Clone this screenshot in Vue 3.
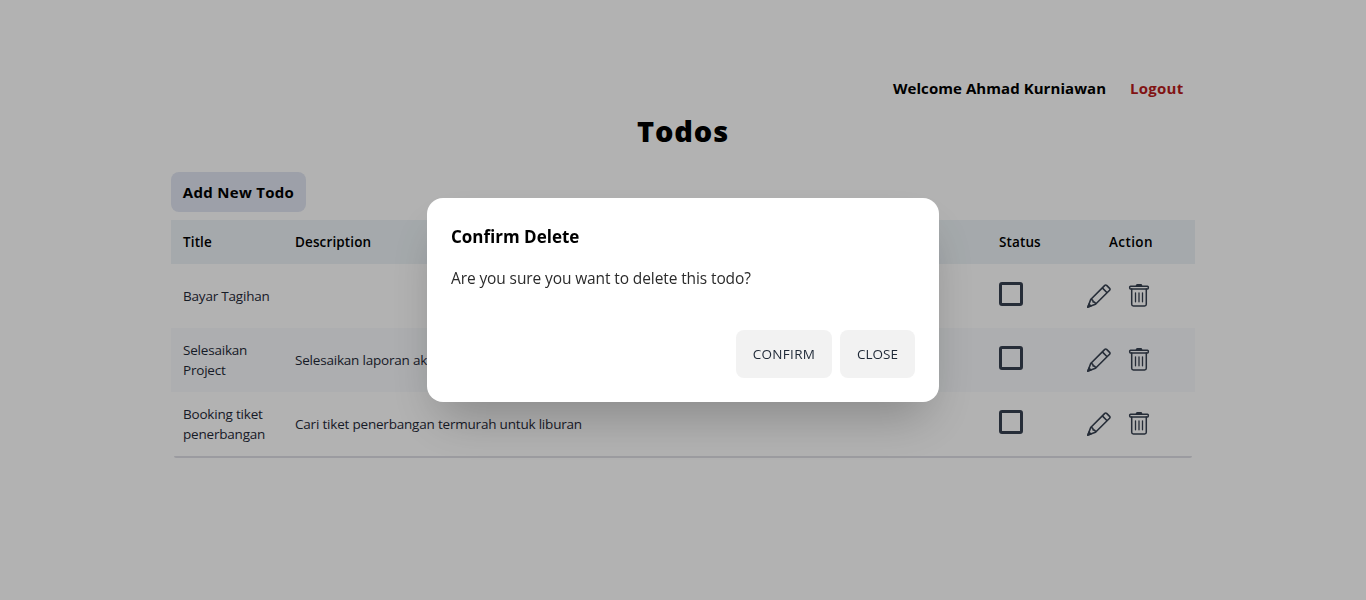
<script setup>
const todos = [
  { title: 'Bayar Tagihan', description: '' },
  { title: 'Selesaikan Project', description: 'Selesaikan laporan akhir' },
  { title: 'Booking tiket penerbangan', description: 'Cari tiket penerbangan termurah untuk liburan' },
]
</script>

<template>
  <main class="page">
    <div class="account">
      <span class="welcome">Welcome Ahmad Kurniawan</span>
      <a class="logout">Logout</a>
    </div>
    <h1 class="heading">Todos</h1>
    <button class="add">Add New Todo</button>
    <div class="table">
      <div class="row head">
        <span>Title</span>
        <span class="h-desc">Description</span>
        <span class="h-status">Status</span>
        <span class="h-action">Action</span>
      </div>
      <div v-for="todo in todos" :key="todo.title" class="row">
        <span class="title">{{ todo.title }}</span>
        <span class="desc">{{ todo.description }}</span>
        <span class="check"></span>
        <span class="actions">
          <svg width="24" height="24" viewBox="0 0 24 24" fill="none" stroke="currentColor" stroke-width="1.6" stroke-linejoin="round">
            <path d="M.9 23.1 3.7 15.5 17.8 1.4Q18.7.6 19.600 1.400L22.600 4.400Q23.400 5.300 22.600 6.200L8.500 20.300Z" />
            <path d="M3.700 15.500Q6.100 15.400 6.100 17.900 8.600 17.900 8.500 20.300M15.300 3.900 20.100 8.700" />
            <path d="M.9 23.100 2 20.200 3.900 22Z" fill="currentColor" />
          </svg>
          <svg width="24" height="24" viewBox="0 0 24 24" fill="none" stroke="currentColor" stroke-width="1.5" stroke-linejoin="round" stroke-linecap="round">
            <rect x="2.700" y="2.200" width="18.600" height="2.700" rx=".8" />
            <path d="M9.500 1.500Q9.500.8 10.300.8H13.700Q14.500.8 14.500 1.500V2H9.500Z" fill="currentColor" />
            <path d="M4.700 5V20.300Q4.700 21.900 6.400 21.900H17.600Q19.300 21.900 19.300 20.300V5" />
            <path d="M8.500 8.800V17.800M12 8.800V17.800M15.500 8.800V17.800" stroke-width="1.300" />
          </svg>
        </span>
      </div>
    </div>
  </main>
  <div class="overlay">
    <section class="modal">
      <h3>Confirm Delete</h3>
      <p>Are you sure you want to delete this todo?</p>
      <div class="buttons">
        <button class="confirm">CONFIRM</button>
        <button class="close">CLOSE</button>
      </div>
    </section>
  </div>
</template>

<style>
body { background: #fff; overflow: hidden; }
</style>

<style scoped>
* { box-sizing: border-box; }
.page, .overlay { font-family: "Segoe UI", "Open Sans", "Noto Sans", sans-serif; }
.page { width: 1024px; height: 600px; margin: 0 auto; padding-top: 76px; color: #000; }
button { font-family: inherit; border: 0; padding: 0; white-space: nowrap; }
.account { display: flex; justify-content: flex-end; gap: 24px; padding-right: 12px; height: 24px; line-height: 25px; font-size: 15px; font-weight: 700; white-space: nowrap; }
.welcome { width: 213px; letter-spacing: .06px; }
.logout { width: 53px; color: #b91c1c; letter-spacing: .25px; }
.heading { margin: 14px 0 0; height: 36px; line-height: 34px; font-size: 29px; font-weight: 800; letter-spacing: .9px; text-align: center; }
.add { display: block; margin-top: 22px; width: 135px; height: 40px; border-radius: 8px; background: #e1e6f2; color: #000; font-size: 15px; font-weight: 700; letter-spacing: .3px; padding-bottom: 1px; }
.table { position: relative; margin-top: 8px; }
.table::after { content: ""; position: absolute; left: 3px; right: 3px; top: 100%; height: 2px; border-radius: 0 0 3px 3px; background: #dfdfe6; }
.row { display: grid; grid-template-columns: 112px 704px 78px 130px; align-items: center; height: 64px; padding-left: 12px; background: #fff; color: #1f2937; font-size: 13.5px; line-height: 20px; letter-spacing: -.2px; }
.row:nth-child(odd):not(.head) { background: #f8fafc; }
.row.head { height: 44px; background: #edf3f7; color: #000; font-weight: 600; letter-spacing: .12px; }
.title { width: 88px; }
.desc { white-space: nowrap; }
.h-action { padding-left: 32px; letter-spacing: .4px; }
.check { width: 24px; height: 24px; margin-bottom: 4px; border: 3px solid #374151; border-radius: 3px; }
.actions { display: flex; gap: 16px; padding-left: 10px; color: #374151; }
.overlay { position: fixed; inset: 0; display: flex; align-items: center; justify-content: center; background: rgba(0, 0, 0, .3); }
.modal { width: 512px; height: 204px; padding: 24px; border-radius: 16px; background: #fff; box-shadow: 0 25px 50px -12px rgba(0, 0, 0, .25); }
h3 { margin: 0; height: 28px; line-height: 29px; font-size: 17px; font-weight: 700; color: #000; }
p { margin: 16px 0 0; height: 24px; line-height: 25px; font-size: 15.5px; color: #2b2b2b; letter-spacing: -.11px; white-space: nowrap; }
.buttons { display: flex; justify-content: flex-end; gap: 8px; margin-top: 40px; }
.buttons button { height: 48px; border-radius: 8px; background: #f2f2f2; color: #1f2937; font-size: 13.5px; font-weight: 500; }
.confirm { width: 96px; letter-spacing: .3px; }
.close { width: 75px; }
</style>
